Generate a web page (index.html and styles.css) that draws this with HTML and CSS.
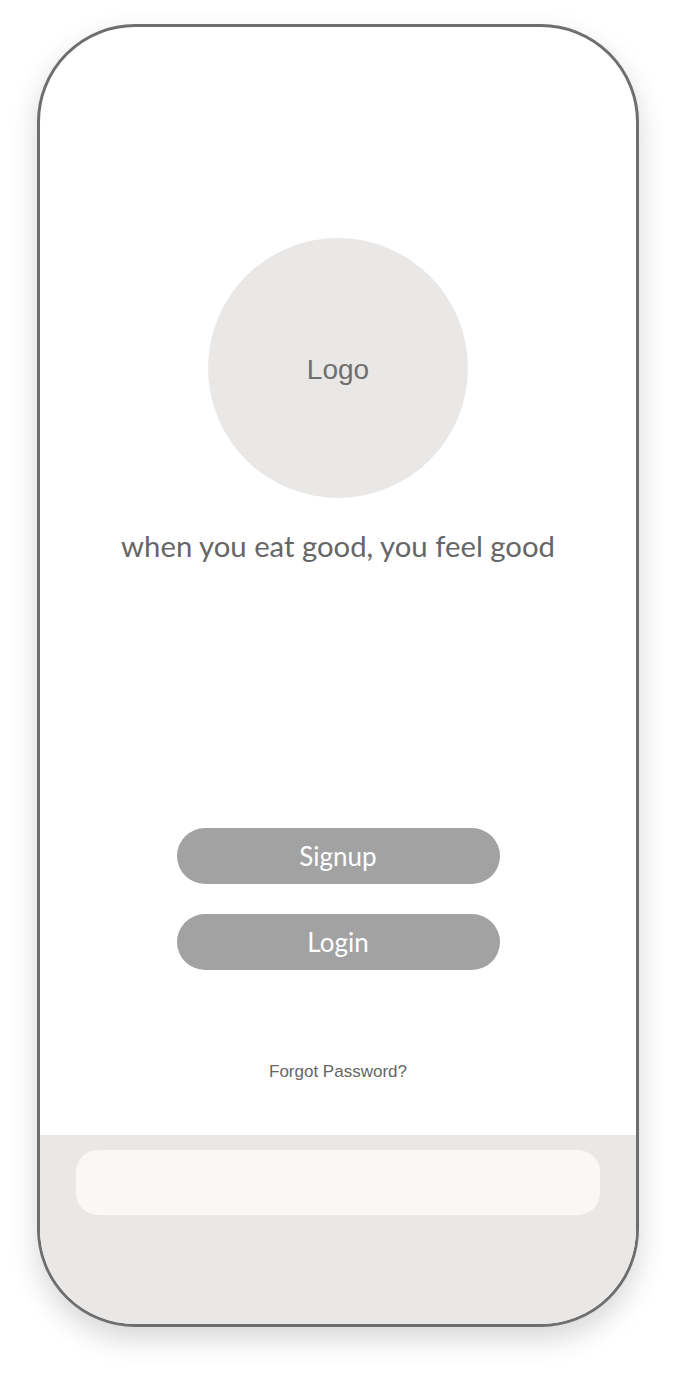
FILE: index.html
```html
<!DOCTYPE html>
<html lang="en">
<head>
<meta charset="utf-8">
<title>Welcome</title>
<link rel="stylesheet" href="styles.css">
</head>
<body>
  <div class="phone">
    <main class="screen">
      <div class="logo"><span>Logo</span></div>
      <p class="tagline">when you eat good, you feel good</p>
      <div class="actions">
        <button class="btn">Signup</button>
        <button class="btn">Login</button>
      </div>
      <a class="forgot" href="#">Forgot Password?</a>
    </main>
    <footer class="bottom">
      <div class="bar"></div>
    </footer>
  </div>
</body>
</html>
```

FILE: styles.css
```css
html, body {
  margin: 0;
  padding: 0;
  background: #ffffff;
}

body {
  padding: 24px 0 0 37px;
  height: 1376px;
  box-sizing: border-box;
  overflow: hidden;
}

.phone {
  width: 602px;
  height: 1303px;
  box-sizing: border-box;
  border: 3px solid #6e6e6e;
  border-radius: 98px;
  overflow: hidden;
  display: flex;
  flex-direction: column;
  background: #ffffff;
  box-shadow: 0 12px 28px rgba(0, 0, 0, 0.16);
}

.screen {
  height: 1108px;
  flex: none;
  display: flex;
  flex-direction: column;
  align-items: center;
  padding-top: 211px;
  box-sizing: border-box;
}

.logo {
  width: 260px;
  height: 260px;
  border-radius: 50%;
  background: #e9e8e6;
  display: flex;
  align-items: center;
  justify-content: center;
}

.logo span {
  font-family: "Liberation Sans", Arial, sans-serif;
  font-size: 28px;
  color: #6f6f6f;
  margin-top: 4px;
}

.tagline {
  margin: 30px 0 0;
  font-family: Lato, "Open Sans", sans-serif;
  font-size: 29.3px;
  color: #666666;
  letter-spacing: 0;
}

.actions {
  margin-top: 265px;
  display: flex;
  flex-direction: column;
  gap: 30px;
}

.btn {
  width: 323px;
  height: 56px;
  border: none;
  border-radius: 28px;
  background: #a2a2a2;
  color: #ffffff;
  font-family: Lato, "Open Sans", sans-serif;
  font-size: 26px;
  padding: 0;
}

.forgot {
  margin-top: 92px;
  font-family: "Liberation Sans", Arial, sans-serif;
  font-size: 17px;
  color: #666666;
  text-decoration: none;
}

.bottom {
  flex: 1;
  background: #e9e8e6;
  padding: 15px 36px 0;
}

.bar {
  height: 65px;
  border-radius: 22px;
  background: #f9f8f7;
}
```
